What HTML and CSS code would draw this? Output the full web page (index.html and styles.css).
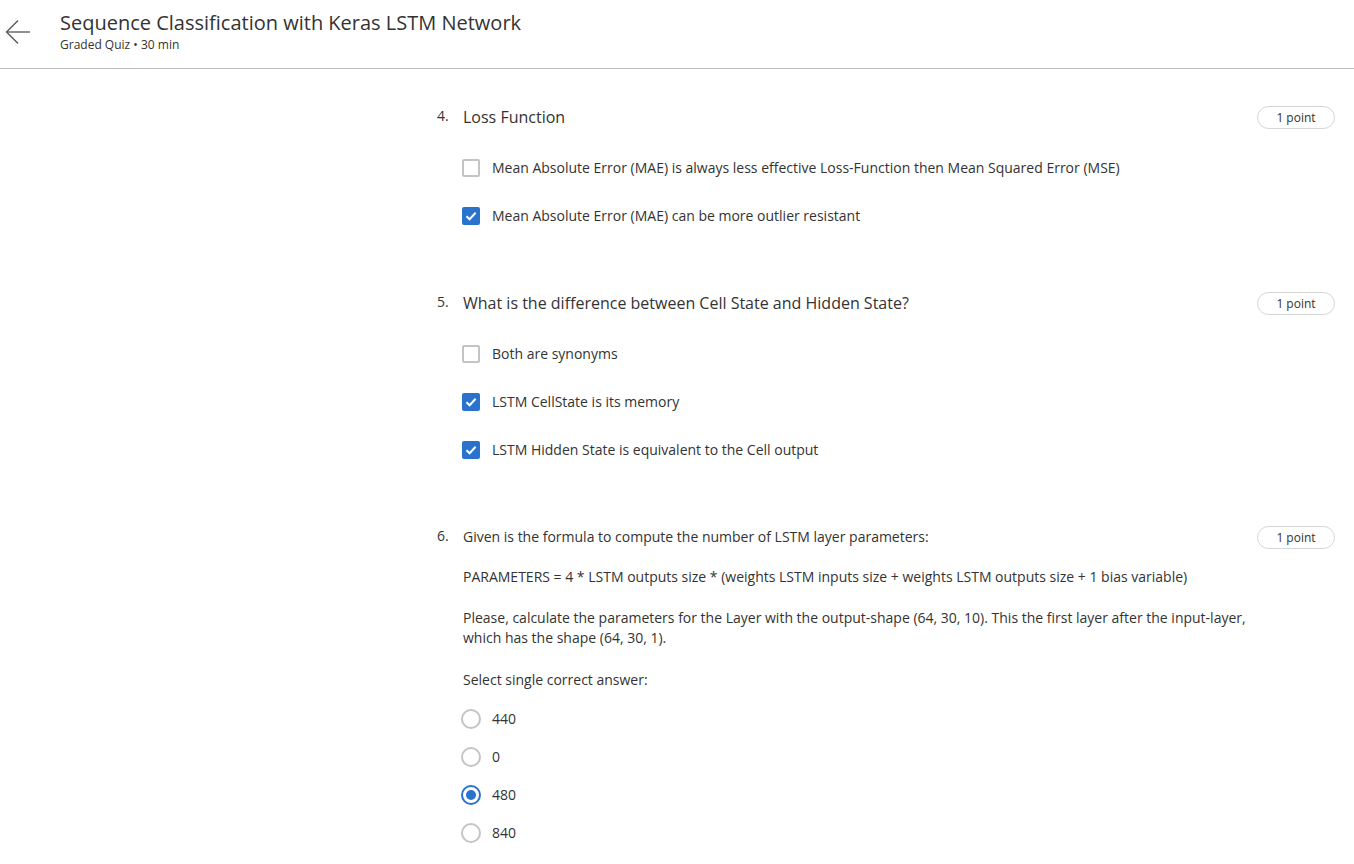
FILE: index.html
```html
<!DOCTYPE html>
<html>
<head>
<meta charset="utf-8">
<link rel="stylesheet" href="styles.css">
</head>
<body>
<header class="topbar">
  <button class="back" aria-label="Back">
    <svg width="26" height="26" viewBox="0 0 26 26" fill="none" stroke="#555" stroke-width="1.3">
      <path d="M25 13H2"/>
      <path d="M13 1.5L1.5 13L13 24.5"/>
    </svg>
  </button>
  <div class="titles">
    <h1 class="title">Sequence Classification with Keras LSTM Network</h1>
    <div class="subtitle">Graded Quiz • 30 min</div>
  </div>
</header>

<main class="quiz">
  <section class="question q4">
    <div class="qhead">
      <span class="num">4.</span>
      <div class="qtitle big">Loss Function</div>
      <span class="points">1 point</span>
    </div>
    <div class="options">
      <label class="opt"><span class="box"></span><span class="otext">Mean Absolute Error (MAE) is always less effective Loss-Function then Mean Squared Error (MSE)</span></label>
      <label class="opt"><span class="box checked"><svg width="14" height="14" viewBox="0 0 14 14"><path d="M2.5 7.2L5.6 10.2L11.6 3.8" fill="none" stroke="#fff" stroke-width="2"/></svg></span><span class="otext">Mean Absolute Error (MAE) can be more outlier resistant</span></label>
    </div>
  </section>

  <section class="question q5">
    <div class="qhead">
      <span class="num">5.</span>
      <div class="qtitle big">What is the difference between Cell State and Hidden State?</div>
      <span class="points">1 point</span>
    </div>
    <div class="options">
      <label class="opt"><span class="box"></span><span class="otext">Both are synonyms</span></label>
      <label class="opt"><span class="box checked"><svg width="14" height="14" viewBox="0 0 14 14"><path d="M2.5 7.2L5.6 10.2L11.6 3.8" fill="none" stroke="#fff" stroke-width="2"/></svg></span><span class="otext">LSTM CellState is its memory</span></label>
      <label class="opt"><span class="box checked"><svg width="14" height="14" viewBox="0 0 14 14"><path d="M2.5 7.2L5.6 10.2L11.6 3.8" fill="none" stroke="#fff" stroke-width="2"/></svg></span><span class="otext">LSTM Hidden State is equivalent to the Cell output</span></label>
    </div>
  </section>

  <section class="question q6">
    <div class="qhead">
      <span class="num">6.</span>
      <div class="qtitle">
        <div class="line">Given is the formula to compute the number of LSTM layer parameters:</div>
        <p class="p1">PARAMETERS = 4 * LSTM outputs size * (weights LSTM inputs size + weights LSTM outputs size + 1 bias variable)</p>
        <p class="p2">Please, calculate the parameters for the Layer with the output-shape (64, 30, 10). This the first layer after the input&#8209;layer, which has the shape (64, 30, 1).</p>
        <p class="p3">Select single correct answer:</p>
        <div class="radios">
          <label class="ropt"><span class="radio"></span><span class="otext">440</span></label>
          <label class="ropt"><span class="radio"></span><span class="otext">0</span></label>
          <label class="ropt"><span class="radio on"></span><span class="otext">480</span></label>
          <label class="ropt"><span class="radio"></span><span class="otext">840</span></label>
        </div>
      </div>
      <span class="points">1 point</span>
    </div>
  </section>
</main>
</body>
</html>
```

FILE: styles.css
```css
* { box-sizing: border-box; }
html, body { margin: 0; padding: 0; background: #fff; }
body {
  font-family: "Open Sans", "Noto Sans", sans-serif;
  color: #333;
  overflow: hidden;
}

.topbar {
  display: flex;
  align-items: flex-start;
  height: 69px;
  border-bottom: 1px solid #bdbdbd;
}
.back {
  border: 0;
  background: none;
  padding: 0;
  margin: 19px 0 0 5px;
  width: 26px;
  height: 26px;
  cursor: pointer;
}
.back svg { display: block; }
.titles { margin-left: 29px; padding-top: 9px; }
.title {
  margin: 0;
  font-size: 20px;
  line-height: 28px;
  font-weight: 400;
  color: #333;
}
.subtitle {
  font-size: 12px;
  line-height: 16px;
  color: #333;
}

.quiz {
  margin-left: 437px;
  width: 898px;
  padding-top: 36px;
}
.question + .question { margin-top: 51px; }

.qhead {
  display: flex;
  align-items: flex-start;
}
.num {
  width: 26px;
  flex: none;
  font-size: 14px;
  line-height: 22px;
}
.qtitle {
  flex: 1;
  font-size: 14px;
  line-height: 24px;
}
.qtitle.big { font-size: 16px; }

.points {
  flex: none;
  margin-top: 1px;
  margin-left: 2px;
  width: 78px;
  height: 23px;
  border: 1px solid #d6d6d6;
  border-radius: 12px;
  font-size: 12px;
  line-height: 21px;
  text-align: center;
  color: #333;
}

.options { margin: 15px 0 0 25px; }
.opt {
  display: flex;
  align-items: center;
  padding: 12px 0;
  height: 48px;
  font-size: 14px;
}
.box {
  width: 18px;
  height: 18px;
  border: 2px solid #c4c4c4;
  border-radius: 2px;
  margin-right: 12px;
  flex: none;
  display: flex;
  align-items: center;
  justify-content: center;
}
.box.checked {
  background: #2a73cc;
  border-color: #2a73cc;
}
.box svg { display: block; }
.otext { line-height: 24px; }

.qtitle p { margin: 0; line-height: 20px; }
.qtitle .line { line-height: 24px; }
.p1 { margin-top: 18px !important; }
.p2 { margin-top: 21px !important; }
.p3 { margin-top: 22px !important; }

.radios { margin-top: 10px; margin-left: -2px; }
.ropt {
  display: flex;
  align-items: center;
  height: 38px;
  font-size: 14px;
}
.radio {
  width: 20px;
  height: 20px;
  border-radius: 50%;
  border: 2px solid #c4c4c4;
  margin-right: 11px;
  flex: none;
  position: relative;
}
.radio.on { border-color: #2a73cc; }
.radio.on::after {
  content: "";
  position: absolute;
  left: 3px;
  top: 3px;
  width: 10px;
  height: 10px;
  border-radius: 50%;
  background: #2a73cc;
}
```
